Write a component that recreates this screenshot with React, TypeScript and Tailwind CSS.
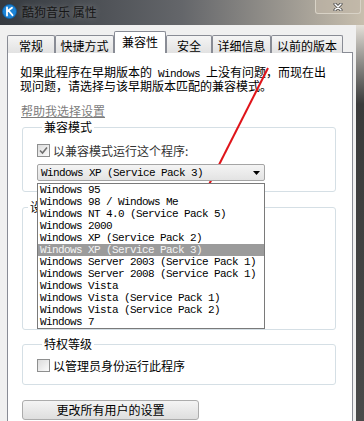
const mono = "font-['Liberation_Mono',monospace] text-[11px] tracking-[-0.6px]"

const tabs = [
  { label: '常规', w: 'w-[48px]' },
  { label: '快捷方式', w: 'w-[59px]' },
  { label: '兼容性', w: 'w-[52px]', active: true },
  { label: '安全', w: 'w-[46px]' },
  { label: '详细信息', w: 'w-[59px]' },
  { label: '以前的版本', w: 'w-[72px]' },
]

const versions = [
  'Windows 95',
  'Windows 98 / Windows Me',
  'Windows NT 4.0 (Service Pack 5)',
  'Windows 2000',
  'Windows XP (Service Pack 2)',
  'Windows XP (Service Pack 3)',
  'Windows Server 2003 (Service Pack 1)',
  'Windows Server 2008 (Service Pack 1)',
  'Windows Vista',
  'Windows Vista (Service Pack 1)',
  'Windows Vista (Service Pack 2)',
  'Windows 7',
]

const TitleBar = () => (
  <div className="flex h-[25px] items-start justify-between bg-gradient-to-r from-[#353a40] via-[#64666a] to-[#c8bfae]">
    <div className="flex items-center pt-[4px]">
      {/* KuGou logo */}
      <svg width="15" height="15" viewBox="0 0 15 15" className="ml-[2px]">
        <circle cx="7.5" cy="7.5" r="7" fill="#1d84d6" stroke="#0d5aa0" strokeWidth="0.8" />
        <path d="M5 3.5 V11.5 M5 7.5 L10 3.8 M6.5 6.5 L10.5 11.2" stroke="#fff" strokeWidth="1.8" fill="none" strokeLinecap="round" />
      </svg>
      <span className="ml-[5px] text-[12px] leading-[14px] text-[#151515] [text-shadow:0_0_6px_rgba(255,255,255,0.35)]">
        酷狗音乐 属性
      </span>
    </div>
    <div className="mr-[3px] flex h-[14px] w-[46px] items-center justify-center rounded-b-[3px] border border-t-0 border-[#d8d2c6] bg-[#bfb6a6]/60">
      <svg width="10" height="8" viewBox="0 0 10 8">
        <path d="M2 1 L8 7 M8 1 L2 7" stroke="#3a3a3a" strokeWidth="3" strokeLinecap="round" />
        <path d="M2 1 L8 7 M8 1 L2 7" stroke="#fff" strokeWidth="1.6" strokeLinecap="round" />
      </svg>
    </div>
  </div>
)

const Tabs = () => (
  <div className="-mb-px flex h-[28px] items-end pt-[6px]">
    {tabs.map((t) =>
      t.active ? (
        <div
          key={t.label}
          className={`relative z-10 h-[22px] ${t.w} rounded-t-[2px] border border-b-0 border-[#898c95] bg-white pt-[4px] text-center`}
        >
          {t.label}
        </div>
      ) : (
        <div
          key={t.label}
          className={`h-[18px] ${t.w} rounded-t-[2px] border border-b-0 border-[#898c95] bg-gradient-to-b from-[#f5f5f5] to-[#e2e2e2] pt-[4px] text-center`}
        >
          {t.label}
        </div>
      )
    )}
  </div>
)

const CheckBox = ({ checked }: { checked?: boolean }) => (
  <div className="flex h-[13px] w-[13px] items-center justify-center border border-[#8e8f8f] bg-gradient-to-br from-[#dcdcdc] to-[#fbfbfb]">
    {checked && (
      <svg width="11" height="11" viewBox="0 0 11 11">
        <path d="M2 5.5 L4.5 8 L9 2.5" stroke="#707070" strokeWidth="1.6" fill="none" />
      </svg>
    )}
  </div>
)

const Legend = ({ children }: { children: React.ReactNode }) => (
  <legend className="ml-[5px] px-[2px] leading-[14px]">{children}</legend>
)

const Panel = () => (
  <div className="h-[380px] border border-[#898c95] bg-white">
    <div className="ml-[12px] mt-[13px] whitespace-nowrap">
      <div>
        如果此程序在早期版本的<span className={mono}> Windows </span>上没有问题，而现在出
      </div>
      <div>现问题，请选择与该早期版本匹配的兼容模式。</div>
    </div>

    <div className="ml-[13px] mt-[13px] text-[#7d7d7d] underline">帮助我选择设置</div>

    {/* 兼容模式 */}
    <fieldset className="ml-[14px] mt-[3px] w-[314px] rounded-[3px] border border-[#d5dfe5] pb-[10px] pl-[14px]">
      <Legend>兼容模式</Legend>
      <div className="flex items-center pt-[10px]">
        <CheckBox checked />
        <span className="ml-[3px] text-[#333]">以兼容模式运行这个程序:</span>
      </div>
      <div className="relative z-20 mt-[7px] w-[228px]">
        <div className="flex h-[17px] items-center justify-between rounded-[2px] border border-[#a5a5a5] bg-gradient-to-b from-[#f4f4f4] to-[#e3e3e3] pl-[3px] pr-[4px]">
          <span className={`${mono} leading-[12px]`}>Windows XP (Service Pack 3)</span>
          <svg width="7" height="4" viewBox="0 0 7 4">
            <path d="M0 0 H7 L3.5 4 Z" fill="#000" />
          </svg>
        </div>
        {/* open drop-down list */}
        <div className="absolute left-0 top-full mt-[2px] w-[228px] border border-[#7a7a7a] bg-white">
          {versions.map((v) => (
            <div
              key={v}
              className={`h-[12px] whitespace-nowrap pl-[2px] leading-[12px] ${mono} ${
                v === 'Windows XP (Service Pack 3)' ? 'bg-[#9b9b9b] text-[#f4f4f4]' : ''
              }`}
            >
              {v}
            </div>
          ))}
        </div>
      </div>
    </fieldset>

    {/* 设置 (covered by the list) */}
    <fieldset className="ml-[14px] mt-[8px] w-[314px] rounded-[3px] border border-[#d5dfe5]">
      <Legend>设置</Legend>
      <div className="h-[115px]" />
    </fieldset>

    {/* 特权等级 */}
    <fieldset className="ml-[14px] mt-[7px] w-[314px] rounded-[3px] border border-[#d5dfe5] pb-[12px] pl-[14px]">
      <Legend>特权等级</Legend>
      <div className="flex items-center pt-[8px]">
        <CheckBox />
        <span className="ml-[3px]">以管理员身份运行此程序</span>
      </div>
    </fieldset>

    <button className="ml-[14px] mt-[15px] h-[20px] w-[177px] rounded-[3px] border border-[#acacac] bg-gradient-to-b from-[#f4f4f4] to-[#dedede] text-[12px] leading-[12px]">
      更改所有用户的设置
    </button>
  </div>
)

export default function App() {
  return (
    <div className="relative h-[421px] w-[364px] overflow-hidden bg-[#f0f0f0] font-['Noto_Sans_CJK_SC',sans-serif] text-[12px] leading-[12px] text-black">
      <TitleBar />
      <div className="flex">
        <div className="ml-[7px] w-[346px]">
          <Tabs />
          <Panel />
        </div>
        <div className="ml-[3px] h-[396px] w-[8px] bg-gradient-to-b from-[#e4e0d8] via-[#3a3a3a] via-20% to-[#4a4a4a]" />
      </div>

      {/* red annotation arrow */}
      <svg className="pointer-events-none absolute left-0 top-0" width="364" height="421">
        <line x1="268" y1="68" x2="189.5" y2="223" stroke="#e0141a" strokeWidth="2" />
        <polygon points="185,232 193.5,224.5 185.5,220.5" fill="#e0141a" />
      </svg>
    </div>
  )
}
